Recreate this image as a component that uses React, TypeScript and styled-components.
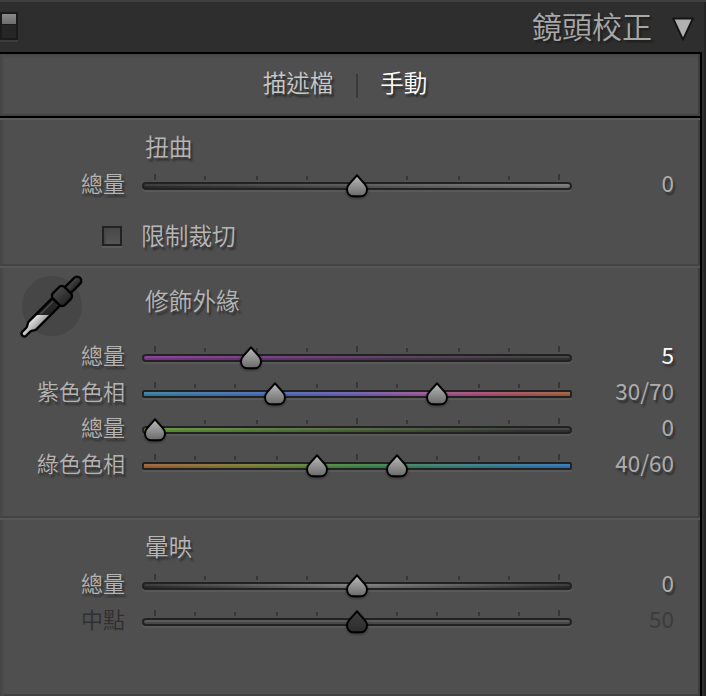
import styled, { createGlobalStyle, css } from 'styled-components';

const GlobalStyle = createGlobalStyle`
    *, *::before, *::after {
        box-sizing: border-box;
    }

    body {
        margin: 0;
        background: #2e2e2e;
        color: #b4b4b4;
        font-family: 'Noto Sans CJK TC', sans-serif;
        font-weight: 350;
        overflow: hidden;
    }
`;

const Panel = styled.div`
    width: 706px;
    height: 696px;
    display: flex;
    flex-direction: column;
    background: linear-gradient(to right, #2e2e2e 704px, #252525 704px);
`;

const Header = styled.header`
    height: 52px;
    display: flex;
    align-items: center;
    justify-content: space-between;
    padding: 0 11px 3px 0;
    border-top: 2px solid #3f3f3f;
`;

const PanelSwitch = styled.button`
    width: 18px;
    height: 28px;
    padding: 0;
    border: 2px solid #1b1b1b;
    background: linear-gradient(#898989, #6d6d6d 10px, #1d1d1d 10px, #1d1d1d 11px, #262626 11px);
    box-shadow: 0 2px 0 #3c3c3c;
`;

const Title = styled.h1`
    display: flex;
    align-items: center;
    gap: 19px;
    margin: 0;
    font-size: 30px;
    line-height: 44px;
    font-weight: 350;
    color: #a8a8a8;
    text-shadow: 2px 2px 2px #1d1d1d;

    span {
        padding-bottom: 2px;
    }
`;

const Arrow = styled.svg`
    width: 24px;
    height: 26px;
    margin-top: 6px;
`;

const Body = styled.main`
    width: 702px;
    flex: 1;
    display: flex;
    flex-direction: column;
    border: solid #000;
    border-width: 2px 2px 0 0;
    background: #4f4f4f;
    box-shadow: inset -2px 0 0 #3e3e3e, inset 2px 0 0 #464646,
        inset 4px 0 0 #4b4b4b, inset 0 -2px 0 #414141, inset 0 2px 0 #474747,
        inset 0 4px 0 #4b4b4b;
`;

const Tabs = styled.nav`
    height: 64px;
    display: flex;
    justify-content: center;
    align-items: center;
    padding: 0 10px 6px 0;
    border-bottom: 2px solid #000;
    box-shadow: inset 0 -2px 0 #434343, 0 2px 0 #5b5b5b;
`;

const Tab = styled.button<{ $active?: boolean }>`
    padding: 0;
    border: 0;
    background: none;
    font: inherit;
    font-size: 23.5px;
    line-height: 36px;
    color: ${({ $active }) => ($active ? '#fff' : '#c8c8c8')};
    text-shadow: 2px 3px 2px #2a2a2a;
`;

const TabDivider = styled.span`
    width: 2px;
    height: 24px;
    margin: 8px 22px 0 23px;
    background: #3a3a3a;
`;

const Section = styled.section<{ $height?: number; $top: number }>`
    position: relative;
    padding-top: ${({ $top }) => $top}px;
    ${({ $height }) =>
        $height &&
        css`
            height: ${$height}px;
            border-bottom: 2px solid #434343;
            box-shadow: 0 2px 0 #565656;
        `}
`;

const Heading = styled.h2<{ $space?: number }>`
    margin: 0 0 ${({ $space }) => $space ?? 3}px 145px;
    font-size: 23.7px;
    line-height: 29px;
    font-weight: 350;
    color: #b6b6b6;
    text-shadow: 2px 3px 2px #2e2e2e;
`;

const Row = styled.div<{ $disabled?: boolean }>`
    display: grid;
    grid-template-columns: 125px 430px 85px;
    column-gap: 17px;
    width: 674px;
    height: 36px;
    color: ${({ $disabled }) => ($disabled ? '#303030' : '#b4b4b4')};
    text-shadow: ${({ $disabled }) =>
        $disabled ? 'none' : '2px 3px 2px #2e2e2e'};
`;

const Label = styled.span`
    text-align: right;
    font-size: 22px;
    line-height: 36px;
    white-space: nowrap;
`;

const Value = styled.span<{ $edited?: boolean; $disabled?: boolean }>`
    text-align: right;
    font-size: 22.5px;
    line-height: 37px;
    font-weight: 400;
    color: #adadad;
    ${({ $disabled }) => $disabled && 'color: #3c3c3c;'}
    ${({ $edited }) => $edited && 'color: #fff;'}
`;

const SliderBox = styled.div`
    position: relative;
    padding-top: 10px;
`;

const Scale = styled.div<{ $steps: number[] }>`
    display: grid;
    grid-template-columns: ${({ $steps }) =>
        $steps.map((step) => `${step}px`).join(' ')};
    align-items: end;
    height: 6px;
    margin: 0 0 2px 12px;
`;

const Tick = styled.i<{ $major: boolean }>`
    width: 2px;
    height: ${({ $major }) => ($major ? 6 : 4)}px;
    background: #373737;
`;

const Track = styled.div<{ $fill: string; $square?: boolean }>`
    height: 8px;
    border: 2px solid #222;
    border-radius: ${({ $square }) => ($square ? 2 : 4)}px;
    background: linear-gradient(rgba(255, 255, 255, 0.1) 2px, transparent 2px),
        ${({ $fill }) => $fill};
    box-shadow: 0 2px 0 #595959;
`;

const Thumb = styled.svg<{ $x: number }>`
    position: absolute;
    left: ${({ $x }) => $x}px;
    top: 9px;
    width: 24px;
    height: 25px;
    margin-left: -12px;
    overflow: visible;
    filter: drop-shadow(0 1px 1px rgba(0, 0, 0, 0.45));
`;

const CheckRow = styled.label`
    display: flex;
    align-items: center;
    gap: 19px;
    height: 36px;
    margin: 18px 0 0 102px;
    font-size: 23.7px;
    line-height: 34px;
    color: #b6b6b6;
    text-shadow: 2px 3px 2px #2e2e2e;

    span {
        padding-bottom: 3px;
    }
`;

const CheckBox = styled.input`
    appearance: none;
    width: 20px;
    height: 20px;
    margin: 0;
    border: 2px solid #222;
    background: linear-gradient(#474747, #565656);
    box-shadow: 0 2px 0 #5b5b5b, inset 2px 0 0 #474747;
`;

const Dropper = styled.svg`
    position: absolute;
    left: 18px;
    top: 6px;
    width: 68px;
    height: 70px;
`;

const QUARTERS = [50, 52, 50, 50, 50, 52, 50, 50, 2];
const TENTHS = [40, 40, 42, 40, 40, 40, 40, 42, 40, 40, 2];

type SliderRowProps = {
    label: string;
    value: string;
    thumbs: number[];
    fill: string;
    tenths?: boolean;
    hue?: boolean;
    edited?: boolean;
    disabled?: boolean;
};

function SliderRow({
    label,
    value,
    thumbs,
    fill,
    tenths,
    hue,
    edited,
    disabled,
}: SliderRowProps) {
    const steps = tenths || hue ? TENTHS : QUARTERS;
    const middle = (steps.length - 1) / 2;

    return (
        <Row $disabled={disabled}>
            <Label>{label}</Label>
            <SliderBox>
                <Scale $steps={steps}>
                    {steps.map((_, i) => (
                        <Tick key={i} $major={i % middle === 0} />
                    ))}
                </Scale>
                <Track $fill={fill} $square={hue} />
                {thumbs.map((x) => (
                    <Thumb key={x} $x={x} viewBox="0 0 24 25">
                        <path
                            d="M12 2.4 L4.4 10.8 C2.8 12.6 2 14.2 2 16.2 C2 20.4 4.8 23.2 8.6 23.2 H15.4 C19.2 23.2 22 20.4 22 16.2 C22 14.2 21.2 12.6 19.6 10.8 Z"
                            fill={disabled ? 'url(#thumbOff)' : 'url(#thumbOn)'}
                            stroke="#000"
                            strokeWidth="2"
                            strokeLinejoin="round"
                        />
                    </Thumb>
                ))}
            </SliderBox>
            <Value $edited={edited} $disabled={disabled}>
                {value}
            </Value>
        </Row>
    );
}

function Gradients() {
    return (
        <svg width="0" height="0" style={{ position: 'absolute' }}>
            <defs>
                <linearGradient id="thumbOn" x1="0" y1="0" x2="0" y2="1">
                    <stop offset="0.1" stopColor="#b2b2b2" />
                    <stop offset="1" stopColor="#6a6a6a" />
                </linearGradient>
                <linearGradient id="thumbOff" x1="0" y1="0" x2="0" y2="1">
                    <stop offset="0" stopColor="#404040" />
                    <stop offset="1" stopColor="#2c2c2c" />
                </linearGradient>
                <linearGradient id="knob" x1="0" y1="0" x2="1" y2="0">
                    <stop offset="0" stopColor="#484848" />
                    <stop offset="1" stopColor="#242424" />
                </linearGradient>
                <linearGradient id="liquid" x1="1" y1="0" x2="0" y2="0">
                    <stop offset="0" stopColor="#a4a4a4" />
                    <stop offset="1" stopColor="#e2e2e2" />
                </linearGradient>
            </defs>
        </svg>
    );
}

function DropperIcon() {
    return (
        <Dropper viewBox="18 272 68 70">
            <circle cx="52" cy="306" r="30" fill="#464646" />
            <g
                transform="translate(62 296) rotate(45)"
                stroke="#000"
                strokeWidth="2.4"
            >
                <rect x="-4.2" y="-25.5" width="8.4" height="22" rx="4.2" fill="url(#knob)" />
                <path
                    d="M-5.4 6 V41 C-5.4 45 -2.7 44.5 -2.7 48 V53.2 A2.7 2.7 0 0 0 2.7 53.2 V48 C2.7 44.5 5.4 45 5.4 41 V6 Z"
                    fill="#252525"
                />
                <path
                    d="M-4.2 31 V41 C-4.2 44 -1.6 44.5 -1.6 48 V53.2 A1.6 1.6 0 0 0 1.6 53.2 V48 C1.6 44.5 4.2 44 4.2 41 V22.6 Z"
                    fill="url(#liquid)"
                    stroke="none"
                />
                <path d="M-2.4 10 V28" stroke="#4c4c4c" strokeWidth="1.4" />
                <rect x="-8.4" y="-8.2" width="16.8" height="16.4" rx="4.2" fill="url(#knob)" />
            </g>
        </Dropper>
    );
}

export default function App() {
    return (
        <>
            <GlobalStyle />
            <Gradients />
            <Panel>
                <Header>
                    <PanelSwitch aria-label="切換鏡頭校正" />
                    <Title>
                        <span>鏡頭校正</span>
                        <Arrow viewBox="0 0 24 26">
                            <path
                                d="M2.2 2.6 H21.8 L12 23.6 Z"
                                fill="#b0b0b0"
                                stroke="#141414"
                                strokeWidth="2"
                                strokeLinejoin="round"
                            />
                        </Arrow>
                    </Title>
                </Header>
                <Body>
                    <Tabs>
                        <Tab>描述檔</Tab>
                        <TabDivider />
                        <Tab $active>手動</Tab>
                    </Tabs>

                    <Section $top={14} $height={148}>
                        <Heading>扭曲</Heading>
                        <SliderRow
                            label="總量"
                            value="0"
                            thumbs={[215]}
                            fill="linear-gradient(90deg, #282828, #707070)"
                        />
                        <CheckRow>
                            <CheckBox type="checkbox" />
                            <span>限制裁切</span>
                        </CheckRow>
                    </Section>

                    <Section $top={20} $height={252}>
                        <DropperIcon />
                        <Heading $space={21}>修飾外緣</Heading>
                        <SliderRow
                            label="總量"
                            value="5"
                            edited
                            thumbs={[109]}
                            fill="linear-gradient(90deg, #7c308c, #303030 90%)"
                        />
                        <SliderRow
                            label="紫色色相"
                            value="30/70"
                            hue
                            thumbs={[133, 295]}
                            fill="linear-gradient(90deg, #307a98, #4264b0 30%, #6658a8 50%, #90508f 65%, #a2446e 80%, #965a30)"
                        />
                        <SliderRow
                            label="總量"
                            value="0"
                            thumbs={[13]}
                            fill="linear-gradient(90deg, #5a9030, #303030 90%)"
                        />
                        <SliderRow
                            label="綠色色相"
                            value="40/60"
                            hue
                            thumbs={[175, 255]}
                            fill="linear-gradient(90deg, #965a30, #75752f 25%, #4e7e34 40%, #367c48 55%, #36786e 70%, #2a6fb0)"
                        />
                    </Section>

                    <Section $top={14}>
                        <Heading>暈映</Heading>
                        <SliderRow
                            label="總量"
                            value="0"
                            thumbs={[215]}
                            fill="linear-gradient(90deg, #282828, #747474 50%, #282828)"
                        />
                        <SliderRow
                            label="中點"
                            value="50"
                            tenths
                            disabled
                            thumbs={[215]}
                            fill="#484848"
                        />
                    </Section>
                </Body>
            </Panel>
        </>
    );
}
